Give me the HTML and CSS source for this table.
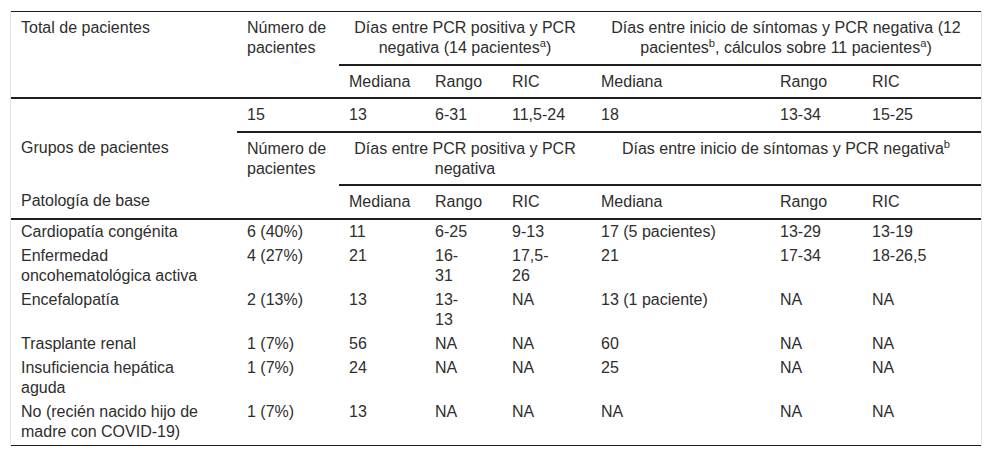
FILE: index.html
```html
<!DOCTYPE html>
<html lang="es">
<head>
<meta charset="utf-8">
<title>Tabla</title>
<link rel="stylesheet" href="styles.css">
</head>
<body>
<div class="frame">
<table class="data">
<colgroup>
<col class="c1"><col class="c2"><col class="c3"><col class="c4"><col class="c5"><col class="c6"><col class="c7"><col class="c8">
</colgroup>
<thead>
<tr class="hrow first">
<th>Total de pacientes</th>
<th>Número de pacientes</th>
<th colspan="3" class="group">Días entre PCR positiva y PCR negativa (14 pacientes<sup>a</sup>)</th>
<th colspan="3" class="group">Días entre inicio de síntomas y PCR negativa (12 pacientes<sup>b</sup>, cálculos sobre 11 pacientes<sup>a</sup>)</th>
</tr>
<tr class="hrow rule">
<th></th><th></th>
<th>Mediana</th><th>Rango</th><th>RIC</th><th>Mediana</th><th>Rango</th><th>RIC</th>
</tr>
</thead>
<tbody>
<tr class="hrow totals">
<td class="blank"></td>
<td>15</td><td>13</td><td>6-31</td><td>11,5-24</td><td>18</td><td>13-34</td><td>15-25</td>
</tr>
<tr class="hrow">
<td>Grupos de pacientes</td>
<td>Número de pacientes</td>
<td colspan="3" class="group">Días entre PCR positiva y PCR negativa</td>
<td colspan="3" class="group">Días entre inicio de síntomas y PCR negativa<sup>b</sup></td>
</tr>
<tr class="hrow rule">
<td>Patología de base</td><td></td>
<td>Mediana</td><td>Rango</td><td>RIC</td><td>Mediana</td><td>Rango</td><td>RIC</td>
</tr>
<tr class="brow">
<td>Cardiopatía congénita</td><td>6 (40%)</td><td>11</td><td>6-25</td><td>9-13</td><td>17 (5 pacientes)</td><td>13-29</td><td>13-19</td>
</tr>
<tr class="brow">
<td>Enfermedad oncohematológica activa</td><td>4 (27%)</td><td>21</td><td>16-<br>31</td><td>17,5-<br>26</td><td>21</td><td>17-34</td><td>18-26,5</td>
</tr>
<tr class="brow">
<td>Encefalopatía</td><td>2 (13%)</td><td>13</td><td>13-<br>13</td><td>NA</td><td>13 (1 paciente)</td><td>NA</td><td>NA</td>
</tr>
<tr class="brow">
<td>Trasplante renal</td><td>1 (7%)</td><td>56</td><td>NA</td><td>NA</td><td>60</td><td>NA</td><td>NA</td>
</tr>
<tr class="brow">
<td>Insuficiencia hepática aguda</td><td>1 (7%)</td><td>24</td><td>NA</td><td>NA</td><td>25</td><td>NA</td><td>NA</td>
</tr>
<tr class="brow last">
<td>No (recién nacido hijo de madre con COVID-19)</td><td>1 (7%)</td><td>13</td><td>NA</td><td>NA</td><td>NA</td><td>NA</td><td>NA</td>
</tr>
</tbody>
</table>
</div>
</body>
</html>
```

FILE: styles.css
```css
html, body {
  margin: 0;
  padding: 0;
  background: #ffffff;
}

body {
  font-family: "Liberation Sans", Arial, sans-serif;
  font-size: 16px;
  color: #2e2e2e;
}

.frame {
  margin: 11px 0 0 10px;
  width: 970px;
  border-left: 1px solid #e4e4e4;
  border-right: 1px solid #e4e4e4;
}

.data {
  width: 970px;
  table-layout: fixed;
  border-collapse: collapse;
  border-top: 1px solid #1e1e1e;
  line-height: 20px;
}

.c1 { width: 226px; }
.c2 { width: 102px; }
.c3 { width: 86px; }
.c4 { width: 77px; }
.c5 { width: 89px; }
.c6 { width: 179px; }
.c7 { width: 92px; }
.c8 { width: 119px; }

.data th,
.data td {
  text-align: left;
  vertical-align: top;
  font-weight: normal;
  padding: 0 10px;
}

.data th:first-child,
.data td:first-child {
  padding-right: 22px;
}

.hrow th,
.hrow td {
  padding-top: 6px;
  padding-bottom: 5.5px;
}

.data .group {
  text-align: center;
  border-bottom: 2px solid #1e1e1e;
}

.rule th,
.rule td,
.totals td {
  border-bottom: 2px solid #1e1e1e;
}

.totals td.blank {
  border-bottom: none;
}

.brow td {
  padding-top: 2px;
  padding-bottom: 2px;
}

.brow.last td {
  padding-bottom: 3.5px;
  border-bottom: 1px solid #1e1e1e;
}

sup {
  font-size: 0.7em;
  line-height: 0;
  vertical-align: super;
}
```
